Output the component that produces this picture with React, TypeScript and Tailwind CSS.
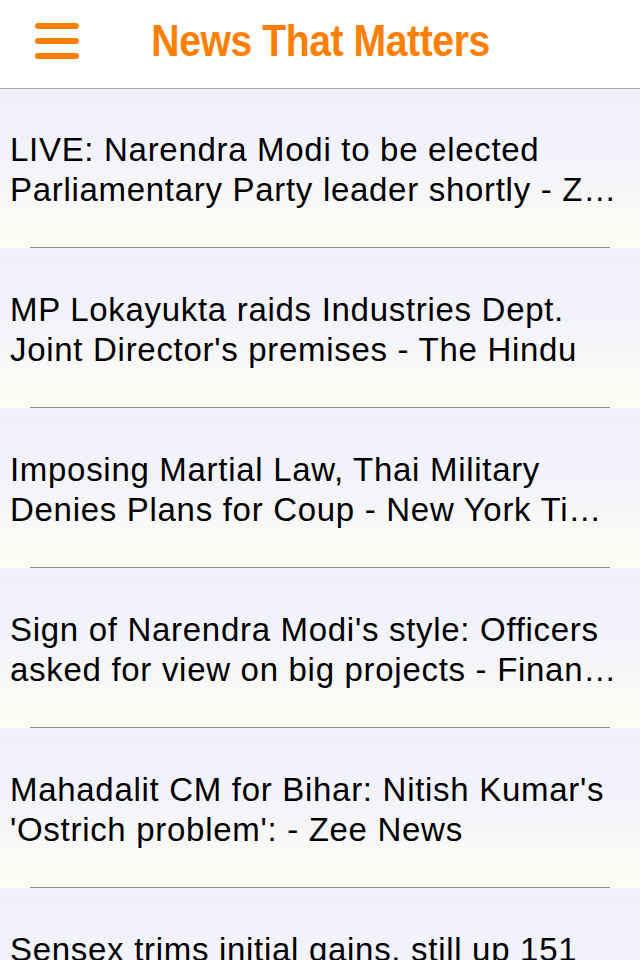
import React from "react";

const headlines: [string, string][] = [
  ["LIVE: Narendra Modi to be elected", "Parliamentary Party leader shortly - Zee News"],
  ["MP Lokayukta raids Industries Dept.", "Joint Director's premises - The Hindu"],
  ["Imposing Martial Law, Thai Military", "Denies Plans for Coup - New York Times"],
  ["Sign of Narendra Modi's style: Officers", "asked for view on big projects - Financial Express"],
  ["Mahadalit CM for Bihar: Nitish Kumar's", "'Ostrich problem': - Zee News"],
  ["Sensex trims initial gains, still up 151", "points - Economic Times"],
];

export default function App() {
  return (
    <div className="w-[640px] h-[960px] overflow-hidden bg-white" style={{ fontFamily: '"Liberation Sans", Arial, sans-serif' }}>
      <header className="h-[89px] border-b border-[#a9a9ab] bg-white flex items-center relative">
        <button className="ml-[35px] w-[44px] h-[36px] flex flex-col justify-between mt-[-7px]">
          <span className="block h-[6px] w-full rounded-full bg-[#ff8000]" />
          <span className="block h-[6px] w-full rounded-full bg-[#ff8000]" />
          <span className="block h-[6px] w-full rounded-full bg-[#ff8000]" />
        </button>
        <div className="absolute left-0 right-0 top-0 h-[88px] flex items-center justify-center pointer-events-none">
          <h1 className="ml-[2px] mt-[-8px] text-[45px] leading-none font-bold text-[#ff8000] tracking-[-0.5px] scale-x-[0.87] whitespace-nowrap">
            News That Matters
          </h1>
        </div>
      </header>
      <ul>
        {headlines.map(([a, b], i) => (
          <li
            key={i}
            className={`${i === 0 ? "h-[159px]" : "h-[160px]"} relative flex items-center bg-gradient-to-b from-[#f0f0fe] via-[#f3f3fb] via-45% to-[#fefef4]`}
          >
            <div className="w-full pl-[10px] pr-[18px] text-[33px] leading-[40px] tracking-[0.7px] text-black mt-[3px]">
              <p className="whitespace-nowrap overflow-hidden text-ellipsis">{a}</p>
              <p className="whitespace-nowrap overflow-hidden text-ellipsis">{b}</p>
            </div>
            <div className="absolute bottom-0 left-[30px] right-[30px] h-px bg-[#8c8c8c]" />
          </li>
        ))}
      </ul>
    </div>
  );
}
